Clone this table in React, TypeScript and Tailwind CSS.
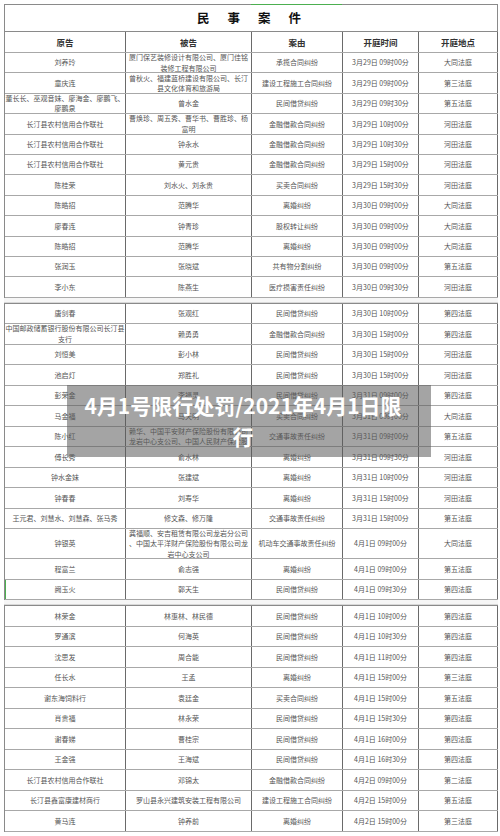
import React from "react";

type R = [string, string, string, string, string];

const sec1: R[] = [
  ["刘养玲", "厦门保艺装修设计有限公司、厦门佳铭\n装修工程有限公司", "承揽合同纠纷", "3月29日 09时00分", "大同法庭"],
  ["童庆连", "曾秋火、福建蓝桥建设有限公司、长汀\n县文化体育和旅游局", "建设工程施工合同纠纷", "3月29日 09时00分", "第三法庭"],
  ["董长长、巫观音妹、廖海金、廖鹏飞、\n廖鹏泉", "曾水金", "民间借贷纠纷", "3月29日 09时30分", "第五法庭"],
  ["长汀县农村信用合作联社", "曹焕珍、周五秀、曹华书、曹胜珍、杨\n富明", "金融借款合同纠纷", "3月29日 10时00分", "河田法庭"],
  ["长汀县农村信用合作联社", "钟永水", "金融借款合同纠纷", "3月29日 10时30分", "河田法庭"],
  ["长汀县农村信用合作联社", "黄元贵", "金融借款合同纠纷", "3月29日 15时00分", "河田法庭"],
  ["陈桂荣", "刘水火、刘永贵", "买卖合同纠纷", "3月29日 15时30分", "河田法庭"],
  ["陈皓招", "范腾华", "离婚纠纷", "3月30日 09时00分", "大同法庭"],
  ["廖春连", "钟青珍", "股权转让纠纷", "3月30日 09时00分", "大同法庭"],
  ["陈皓招", "范腾华", "离婚纠纷", "3月30日 09时00分", "大同法庭"],
  ["张润玉", "张晓斌", "共有物分割纠纷", "3月30日 09时00分", "第五法庭"],
  ["李小东", "陈燕生", "医疗损害责任纠纷", "3月30日 09时30分", "河田法庭"],
];

const sec2: R[] = [
  ["唐剑春", "张观红", "民间借贷纠纷", "3月30日 10时00分", "第四法庭"],
  ["中国邮政储蓄银行股份有限公司长汀县\n支行", "赖勇勇", "金融借款合同纠纷", "3月30日 15时00分", "第四法庭"],
  ["刘恒美", "彭小林", "民间借贷纠纷", "3月30日 15时00分", "河田法庭"],
  ["池启灯", "郑胜礼", "民间借贷纠纷", "3月30日 15时00分", "河田法庭"],
  ["彭荣金", "李福灵", "民间借贷纠纷", "3月31日 09时00分", "第四法庭"],
  ["马金福", "马天明", "买卖合同纠纷", "3月31日 09时00分", "大同法庭"],
  ["陈小红", "赖华、中国平安财产保险股份有限公司\n龙岩中心支公司、中国人民财产保险股", "交通事故责任纠纷", "3月31日 09时00分", "第五法庭"],
  ["傅长秀", "俞水林", "离婚纠纷", "3月31日 09时30分", "河田法庭"],
  ["钟水金妹", "张建斌", "离婚纠纷", "3月31日 10时00分", "河田法庭"],
  ["钟春春", "刘寿华", "离婚纠纷", "3月31日 15时00分", "河田法庭"],
  ["王元君、刘慧水、刘慧森、张马秀", "修文森、修万隆", "交通事故责任纠纷", "3月31日 15时00分", "第五法庭"],
  ["钟银英", "龚福顺、安吉租赁有限公司龙岩分公司\n、中国太平洋财产保险股份有限公司龙\n岩中心支公司", "机动车交通事故责任纠纷", "4月1日 09时00分", "大同法庭"],
  ["程富兰", "俞志强", "离婚纠纷", "4月1日 09时00分", "第五法庭"],
  ["阙玉火", "郭天生", "民间借贷纠纷", "4月1日 09时30分", "第四法庭"],
];

const sec3: R[] = [
  ["林荣金", "林惠林、林民德", "民间借贷纠纷", "4月1日 10时00分", "第四法庭"],
  ["罗通滨", "何海英", "民间借贷纠纷", "4月1日 10时30分", "第四法庭"],
  ["沈思发", "周合能", "民间借贷纠纷", "4月1日 11时00分", "第四法庭"],
  ["任长水", "王孟", "离婚纠纷", "4月1日 15时00分", "第三法庭"],
  ["谢东海饲料行", "袁廷金", "买卖合同纠纷", "4月1日 15时00分", "第五法庭"],
  ["肖贵福", "林永荣", "民间借贷纠纷", "4月1日 15时30分", "第四法庭"],
  ["谢春娣", "曹桂宗", "民间借贷纠纷", "4月1日 16时00分", "第四法庭"],
  ["王金强", "王海斌", "民间借贷纠纷", "4月1日 16时30分", "第四法庭"],
  ["长汀县农村信用合作联社", "邓锦太", "金融借款合同纠纷", "4月2日 09时00分", "第二法庭"],
  ["长汀县鑫富康建材商行", "罗山县永兴建筑安装工程有限公司", "建设工程施工合同纠纷", "4月2日 15时00分", "第五法庭"],
  ["黄马连", "钟养前", "离婚纠纷", "4月2日 15时00分", "第三法庭"],
];

const widths = ["w-[121px]", "w-[126px]", "w-[91px]", "w-[76px]", "w-[79px]"];

function Row({ cells, h, header, greenLeft }: { cells: string[]; h: string; header?: boolean; greenLeft?: boolean }) {
  return (
    <div className={`flex border-b border-[#a8a8a8] ${h} ${greenLeft ? "shadow-[inset_1px_0_0_#4caf50]" : ""}`}>
      {cells.map((c, i) => (
        <div
          key={i}
          className={`${widths[i]} shrink-0 h-full border-r border-[#6a6a6a] flex items-center justify-center text-center whitespace-pre-line overflow-hidden ${
            header
              ? "text-[8.5px] font-bold text-[#333] leading-[10px]"
              : "text-[7px] text-[#555] leading-[10.5px]"
          }`}
        >
          {c}
        </div>
      ))}
    </div>
  );
}

export default function App() {
  return (
    <div
      className="relative w-[500px] h-[836px] bg-white overflow-hidden pt-[4px] pl-[4px]"
      style={{ fontFamily: '"Noto Sans CJK SC", "Noto Sans", sans-serif' }}
    >
      {/* Section 1 */}
      <div className="w-[494px] border-l border-t border-[#8a8a8a] relative">
        <div className="absolute top-[-1px] left-[246px] w-[91px] h-[1px] bg-[#4caf50]" />
        <div className="h-[27px] border-b border-r border-[#8a8a8a] flex items-center justify-center gap-[18px] pr-[4px] text-[12.5px] font-bold text-[#111]">
          <span>民</span>
          <span>事</span>
          <span>案</span>
          <span>件</span>
        </div>
        <Row cells={["原告", "被告", "案由", "开庭时间", "开庭地点"]} h="h-[21px]" header />
        {sec1.map((r, i) => (
          <Row key={i} cells={r} h="h-[20.4px]" />
        ))}
      </div>

      <div className="h-[5px] w-[494px] border-b border-[#d8d8d8] bg-[#f6f6f6]" />

      {/* Section 2 */}
      <div className="w-[494px] border-l border-t border-[#8a8a8a]">
        {sec2.map((r, i) => (
          <Row key={i} cells={r} h={i === 11 ? "h-[30px]" : "h-[20.5px]"} greenLeft={i === 13} />
        ))}
      </div>

      <div className="h-[5px] w-[494px] border-b border-[#d8d8d8] bg-[#f6f6f6]" />

      {/* Section 3 */}
      <div className="w-[494px] border-l border-t border-[#8a8a8a]">
        {sec3.map((r, i) => (
          <Row key={i} cells={r} h="h-[20.5px]" />
        ))}
      </div>

      {/* Overlay banner */}
      <div className="absolute left-[67px] top-[385px] w-[364px] h-[72px] bg-[rgba(90,90,90,0.55)] pt-[5px] pl-[6px] pr-[18px] text-center text-white font-bold text-[21px] leading-[31px]">
        4月1号限行处罚/2021年4月1日限
        <br />行
      </div>
    </div>
  );
}
